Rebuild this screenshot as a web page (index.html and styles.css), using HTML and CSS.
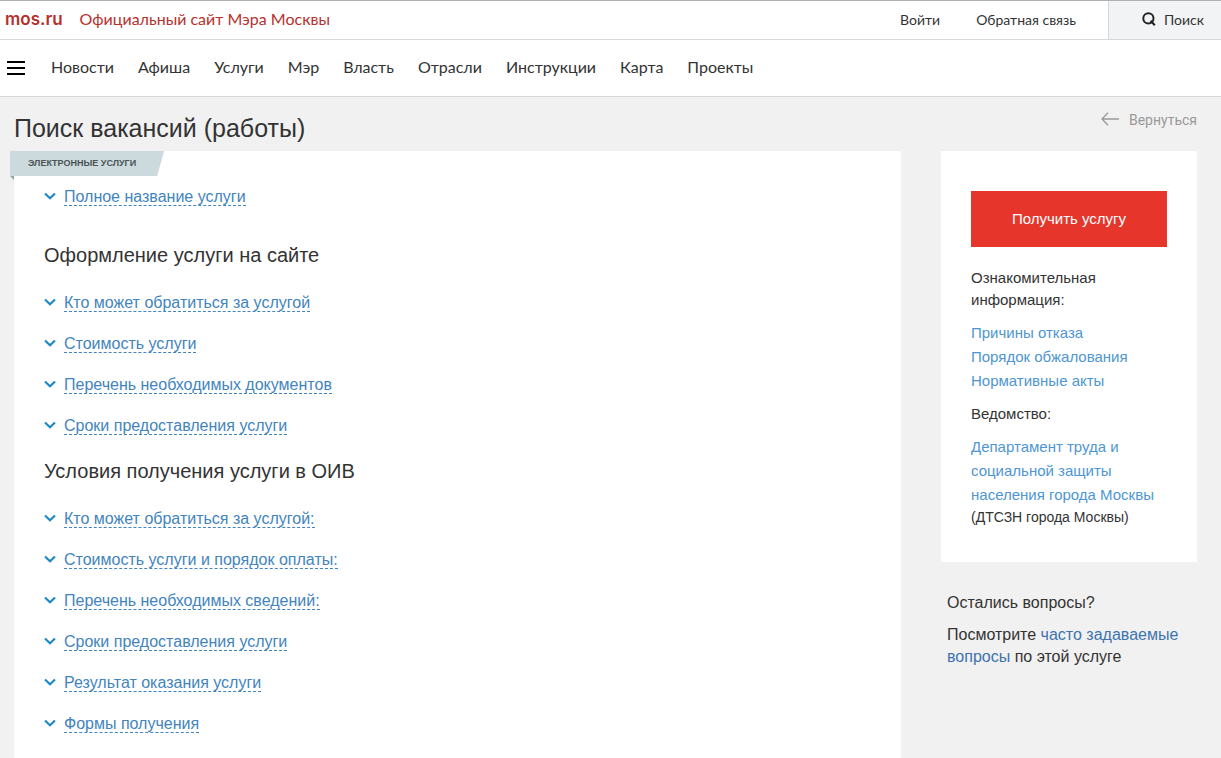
FILE: index.html
```html
<!DOCTYPE html>
<html lang="ru">
<head>
<meta charset="utf-8">
<meta name="viewport" content="width=device-width, initial-scale=1">
<title>Поиск вакансий (работы)</title>
<link rel="stylesheet" href="styles.css">
</head>
<body>
<svg class="sprite" aria-hidden="true">
  <symbol id="chevron" viewBox="0 0 12 8"><path d="M1 1.5 6 6.2 11 1.5" fill="none" stroke="currentColor" stroke-width="2.1"/></symbol>
</svg>
<header class="header">
  <div class="topbar">
    <a class="logo" href="#">mos.ru</a>
    <a class="slogan" href="#">Официальный сайт Мэра Москвы</a>
    <div class="account">
      <a class="top-link" href="#">Войти</a>
      <a class="top-link" href="#">Обратная связь</a>
    </div>
    <button class="search" type="button">
      <svg class="search-icon" viewBox="0 0 14 14" aria-hidden="true"><circle cx="6.4" cy="6.4" r="5.1"/><path d="M8.6 8.8 12.8 13.2"/></svg>
      <span>Поиск</span>
    </button>
  </div>
  <nav class="nav">
    <button class="menu" type="button" aria-label="Меню"><span class="bar"></span><span class="bar"></span><span class="bar"></span></button>
    <div class="nav-links">
      <a class="nav-link" href="#">Новости</a>
      <a class="nav-link" href="#">Афиша</a>
      <a class="nav-link" href="#">Услуги</a>
      <a class="nav-link" href="#">Мэр</a>
      <a class="nav-link" href="#">Власть</a>
      <a class="nav-link" href="#">Отрасли</a>
      <a class="nav-link" href="#">Инструкции</a>
      <a class="nav-link" href="#">Карта</a>
      <a class="nav-link" href="#">Проекты</a>
    </div>
  </nav>
</header>
<div class="title-row">
  <h1 class="title">Поиск вакансий (работы)</h1>
  <a class="back" href="#">
    <svg class="back-icon" viewBox="0 0 18 16" aria-hidden="true"><path d="M7 .8 1 7l6 6.2M1 7h17"/></svg>
    <span>Вернуться</span>
  </a>
</div>
<div class="page">
  <main class="panel">
    <div class="ribbon"><span class="ribbon-label">Электронные услуги</span></div>
    <div class="group">
      <button class="toggle" type="button"><svg class="chevron" aria-hidden="true"><use href="#chevron"/></svg><span class="toggle-text">Полное название услуги</span></button>
    </div>
    <h2 class="heading heading-first">Оформление услуги на сайте</h2>
    <div class="group">
      <button class="toggle" type="button"><svg class="chevron" aria-hidden="true"><use href="#chevron"/></svg><span class="toggle-text">Кто может обратиться за услугой</span></button>
      <button class="toggle" type="button"><svg class="chevron" aria-hidden="true"><use href="#chevron"/></svg><span class="toggle-text">Стоимость услуги</span></button>
      <button class="toggle" type="button"><svg class="chevron" aria-hidden="true"><use href="#chevron"/></svg><span class="toggle-text">Перечень необходимых документов</span></button>
      <button class="toggle" type="button"><svg class="chevron" aria-hidden="true"><use href="#chevron"/></svg><span class="toggle-text">Сроки предоставления услуги</span></button>
    </div>
    <h2 class="heading">Условия получения услуги в ОИВ</h2>
    <div class="group">
      <button class="toggle" type="button"><svg class="chevron" aria-hidden="true"><use href="#chevron"/></svg><span class="toggle-text">Кто может обратиться за услугой:</span></button>
      <button class="toggle" type="button"><svg class="chevron" aria-hidden="true"><use href="#chevron"/></svg><span class="toggle-text">Стоимость услуги и порядок оплаты:</span></button>
      <button class="toggle" type="button"><svg class="chevron" aria-hidden="true"><use href="#chevron"/></svg><span class="toggle-text">Перечень необходимых сведений:</span></button>
      <button class="toggle" type="button"><svg class="chevron" aria-hidden="true"><use href="#chevron"/></svg><span class="toggle-text">Сроки предоставления услуги</span></button>
      <button class="toggle" type="button"><svg class="chevron" aria-hidden="true"><use href="#chevron"/></svg><span class="toggle-text">Результат оказания услуги</span></button>
      <button class="toggle" type="button"><svg class="chevron" aria-hidden="true"><use href="#chevron"/></svg><span class="toggle-text">Формы получения</span></button>
    </div>
  </main>
  <aside class="side">
    <section class="card">
      <button class="order" type="button">Получить услугу</button>
      <p class="card-label">Ознакомительная информация:</p>
      <div class="card-links">
        <a class="card-link" href="#">Причины отказа</a>
        <a class="card-link" href="#">Порядок обжалования</a>
        <a class="card-link" href="#">Нормативные акты</a>
      </div>
      <p class="card-label">Ведомство:</p>
      <div class="card-links">
        <a class="card-link" href="#">Департамент труда и социальной защиты населения города Москвы</a>
      </div>
      <p class="card-note">(ДТСЗН города Москвы)</p>
    </section>
    <section class="help">
      <p class="help-text">Остались вопросы?</p>
      <p class="help-text">Посмотрите <a class="help-link" href="#">часто задаваемые вопросы</a> по этой услуге</p>
    </section>
  </aside>
</div>
</body>
</html>
```
FILE: styles.css
```css
* { box-sizing: border-box; }
body {
  margin: 0;
  min-height: 100vh;
  display: flex;
  flex-direction: column;
  background: #f1f1f1;
  color: #333;
  font-family: "Liberation Sans", Arial, sans-serif;
}
a { text-decoration: none; }
button { font: inherit; border: 0; padding: 0; background: none; cursor: pointer; }
h1, h2, p { margin: 0; font-weight: 400; }
.sprite { display: none; }

.header {
  background: #fff;
  border-top: 1px solid #b0b0b2;
  border-bottom: 1px solid #d8d8d8;
  font-family: Lato, sans-serif;
}
.topbar {
  display: flex;
  align-items: center;
  height: 39px;
  padding-left: 5px;
  border-bottom: 1px solid #d6d8da;
}
.logo { padding-bottom: 3px; color: #b5302c; font-size: 17px; font-weight: 600; font-family: Inter, sans-serif; margin-right: 17px; }
.slogan { padding-bottom: 3px; color: #b8302c; font-size: 16px; }
.account { display: flex; gap: 36px; margin-left: auto; margin-right: 32px; padding-bottom: 2px; }
.top-link { color: #333; font-size: 14px; }
.search {
  display: flex;
  align-items: center;
  align-self: stretch;
  gap: 8px;
  padding: 0 17px 2px 33px;
  border-left: 1px solid #d6d8da;
  background: #f2f3f5;
  color: #333;
  font-size: 14px;
}
.search-icon { width: 14px; height: 14px; fill: none; stroke: #222; stroke-width: 2; }
.nav { display: flex; align-items: center; gap: 26px; height: 56px; padding-left: 7px; }
.menu { display: flex; flex-direction: column; gap: 4px; width: 18px; }
.bar { width: 18px; height: 2px; background: #000; }
.nav-links { display: flex; gap: 24px; padding-bottom: 3px; }
.nav-link { color: #333; font-size: 16px; }

.title-row {
  display: flex;
  justify-content: space-between;
  align-items: flex-start;
  height: 54px;
  padding: 15px 24px 0 14px;
}
.title { font-size: 25px; line-height: 32px; }
.back { display: flex; align-items: center; gap: 10px; color: #999; font-family: Roboto, sans-serif; font-size: 14px; line-height: 16px; }
.back-icon { width: 18px; height: 16px; fill: none; stroke: #999; stroke-width: 1.3; }

.page {
  flex: 1;
  display: grid;
  grid-template-columns: minmax(0, 1fr) 256px;
  gap: 40px;
  padding: 0 24px 0 14px;
}
.panel { position: relative; padding: 37px 30px 24px; background: #fff; }
.ribbon { position: absolute; top: 0; left: -4px; }
.ribbon::after {
  content: "";
  position: absolute;
  top: 100%;
  left: 0;
  border-top: 4px solid #93a5a8;
  border-left: 4px solid transparent;
}
.ribbon-label {
  display: block;
  padding: 0 28px 1px 18px;
  background: #cddadd;
  clip-path: polygon(0 0, 100% 0, calc(100% - 7px) 100%, 0 100%);
  font-family: "Liberation Sans", Arial, sans-serif;
  font-size: 9px;
  font-weight: 700;
  line-height: 24px;
  text-transform: uppercase;
  color: #4a5456;
}
.group { display: flex; flex-direction: column; align-items: flex-start; gap: 23px; }
.toggle { display: flex; align-items: center; gap: 8px; color: #4384bd; font-size: 16px; line-height: 17px; text-align: left; }
.toggle-text { border-bottom: 1px dashed #4384bd; }
.chevron { width: 12px; height: 10px; padding-bottom: 2px; color: #1b87c4; }
.heading { margin: 24px 0 27px; font-size: 20px; line-height: 24px; }
.heading-first { margin-top: 37px; }

.card { padding: 40px 30px 34px; background: #fff; }
.order { width: 100%; height: 56px; margin-bottom: 20px; padding-bottom: 2px; background: #e6352b; color: #fff; font-size: 15px; }
.card-label { font-size: 15px; line-height: 22px; }
.card-links { margin: 10px 0; }
.card-link { display: block; color: #4e96d3; font-size: 15px; line-height: 24px; }
.card-note { margin-top: -11px; font-size: 14px; line-height: 22px; }
.help { display: grid; gap: 10px; padding: 30px 6px; }
.help-text { font-size: 16px; line-height: 22px; }
.help-link { color: #3d74b0; }
```
